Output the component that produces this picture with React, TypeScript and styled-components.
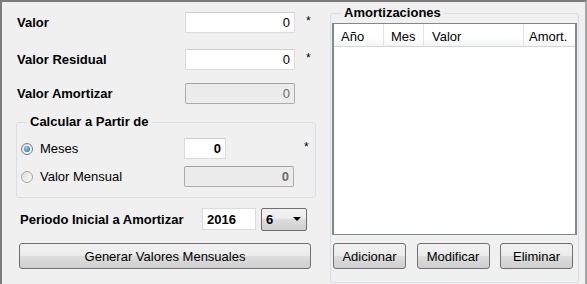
import React from "react";
import styled, { createGlobalStyle } from "styled-components";

const GlobalStyle = createGlobalStyle`
  html, body {
    margin: 0;
    padding: 0;
    background: #f0f0f0;
  }
  * {
    box-sizing: border-box;
  }
`;

const Frame = styled.div`
  width: 587px;
  height: 284px;
  display: flex;
  background: #f0f0f0;
  border-top: 2px solid #7c7c7c;
  border-left: 2px solid #7c7c7c;
  border-right: 2px solid #a3a3a3;
  font-family: "Liberation Sans", Arial, sans-serif;
  font-size: 13px;
  color: #000;
  overflow: hidden;
`;

const LeftCol = styled.div`
  width: 328px;
  padding-left: 15px;
  display: flex;
  flex-direction: column;
`;

const RightCol = styled.div`
  flex: 1;
  display: flex;
  padding-top: 4px;
`;

const FieldRow = styled.div<{ $top: number }>`
  display: flex;
  align-items: center;
  height: 21px;
  margin-top: ${(p) => p.$top}px;
`;

const Label = styled.span<{ $width: number }>`
  width: ${(p) => p.$width}px;
  font-weight: bold;
  white-space: nowrap;
`;

const TextBox = styled.div<{ $width: number; $disabled?: boolean; $bold?: boolean }>`
  width: ${(p) => p.$width}px;
  height: 21px;
  padding: 0 4px;
  display: flex;
  align-items: center;
  justify-content: flex-end;
  background: ${(p) => (p.$disabled ? "#ececec" : "#ffffff")};
  border: 1px solid ${(p) => (p.$disabled ? "#adadad" : "#dcdcdc")};
  border-top-color: ${(p) => (p.$disabled ? "#a2a2a2" : "#cdcdcd")};
  border-radius: ${(p) => (p.$disabled ? "2px" : "1px")};
  color: ${(p) => (p.$disabled ? "#6d6d6d" : "#000")};
  font-weight: ${(p) => (p.$bold ? "bold" : "normal")};
`;

const Required = styled.span<{ $gap: number }>`
  margin-left: ${(p) => p.$gap}px;
  align-self: flex-start;
  margin-top: 2px;
  font-size: 12px;
`;

const Group = styled.fieldset<{ $width: number; $height: number }>`
  margin: 11px 0 0 -1px;
  padding: 9px 0 0 5px;
  width: ${(p) => p.$width}px;
  height: ${(p) => p.$height}px;
  border: 1px solid #d5dfe5;
  border-radius: 3px;
  min-width: 0;
`;

const TableGroup = styled(Group)`
  margin: 0;
  padding: 0 0 0 5px;
`;

const Legend = styled.legend`
  margin-left: 5px;
  padding: 0 3px 0 3px;
  font-weight: bold;
  line-height: 14px;
`;

const RadioRow = styled.div<{ $top: number }>`
  display: flex;
  align-items: center;
  height: 21px;
  margin-top: ${(p) => p.$top}px;
`;

const RadioLabel = styled.label`
  width: 163px;
  display: flex;
  align-items: center;
  gap: 7px;
  margin-left: -1px;
`;

const RadioDot = styled.span<{ $checked?: boolean }>`
  width: 12px;
  height: 12px;
  border-radius: 50%;
  border: 1px solid ${(p) => (p.$checked ? "#6f7f8f" : "#a5a5a5")};
  background: linear-gradient(135deg, #dedede, #fbfbfb);
  display: flex;
  align-items: center;
  justify-content: center;
  &::after {
    content: "";
    width: 6px;
    height: 6px;
    border-radius: 50%;
    background: ${(p) =>
      p.$checked ? "radial-gradient(circle at 40% 35%, #8fd0f7, #1e5f93)" : "transparent"};
  }
`;

const PeriodRow = styled.div`
  display: flex;
  align-items: center;
  margin-top: 10px;
  padding-left: 3px;
  height: 22px;
`;

const YearBox = styled.div`
  width: 54px;
  height: 22px;
  margin-left: 15px;
  padding-left: 4px;
  display: flex;
  align-items: center;
  background: #fff;
  border: 1px solid #dcdcdc;
  font-weight: bold;
`;

const Select = styled.div`
  width: 46px;
  height: 23px;
  margin-left: 5px;
  padding: 0 5px 0 4px;
  display: flex;
  align-items: center;
  justify-content: space-between;
  font-weight: bold;
  border: 1px solid #707070;
  border-radius: 2px;
  background: linear-gradient(#f2f2f2 0%, #ebebeb 50%, #dddddd 50%, #cfcfcf 100%);
`;

const Caret = styled.span`
  width: 0;
  height: 0;
  border-left: 4px solid transparent;
  border-right: 4px solid transparent;
  border-top: 4px solid #000;
`;

const Button = styled.button<{ $width: number }>`
  width: ${(p) => p.$width}px;
  height: 26px;
  padding: 0;
  font-family: inherit;
  font-size: 13px;
  color: #000;
  border: 1px solid #707070;
  border-radius: 3px;
  background: linear-gradient(#f2f2f2 0%, #ebebeb 50%, #dddddd 50%, #cfcfcf 100%);
`;

const WideButton = styled(Button)`
  margin: 13px 0 0 2px;
`;

const GridBox = styled.div`
  margin-top: 3px;
  width: 245px;
  height: 212px;
  margin-left: -4px;
  background: #fff;
  border: 1px solid #828790;
  border-left-width: 2px;
  border-right-width: 2px;
`;

const HeaderRow = styled.div`
  display: grid;
  grid-template-columns: 50px 40px 100px 1fr;
  height: 23px;
  background: linear-gradient(#ffffff 0%, #ffffff 60%, #f4f5f7 100%);
  border-bottom: 1px solid #d5d5d5;
`;

const HeaderCell = styled.div<{ $pad: number }>`
  padding: 5px 0 0 ${(p) => p.$pad}px;
  border-right: 1px solid #e3e4e6;
  white-space: nowrap;
  &:last-child {
    border-right: none;
  }
`;

const ButtonBar = styled.div`
  display: flex;
  justify-content: space-between;
  margin: 8px 0 0 -3px;
  width: 240px;
`;

const App: React.FC = () => {
  return (
    <>
      <GlobalStyle />
      <Frame>
        <LeftCol>
          <FieldRow $top={10}>
            <Label $width={168}>Valor</Label>
            <TextBox $width={110}>0</TextBox>
            <Required $gap={11}>*</Required>
          </FieldRow>
          <FieldRow $top={16}>
            <Label $width={168}>Valor Residual</Label>
            <TextBox $width={110}>0</TextBox>
            <Required $gap={11}>*</Required>
          </FieldRow>
          <FieldRow $top={13}>
            <Label $width={168}>Valor Amortizar</Label>
            <TextBox $width={110} $disabled>
              0
            </TextBox>
          </FieldRow>

          <Group $width={300} $height={83}>
            <Legend>Calcular a Partir de</Legend>
            <RadioRow $top={0}>
              <RadioLabel>
                <RadioDot $checked />
                Meses
              </RadioLabel>
              <TextBox $width={42} $bold>
                0
              </TextBox>
              <Required $gap={78}>*</Required>
            </RadioRow>
            <RadioRow $top={7}>
              <RadioLabel>
                <RadioDot />
                Valor Mensual
              </RadioLabel>
              <TextBox $width={110} $disabled $bold>
                0
              </TextBox>
            </RadioRow>
          </Group>

          <PeriodRow>
            <Label $width={167}>Periodo Inicial a Amortizar</Label>
            <YearBox>2016</YearBox>
            <Select>
              6
              <Caret />
            </Select>
          </PeriodRow>

          <WideButton $width={292}>Generar Valores Mensuales</WideButton>
        </LeftCol>

        <RightCol>
          <TableGroup $width={249} $height={277}>
            <Legend>Amortizaciones</Legend>
            <GridBox>
              <HeaderRow>
                <HeaderCell $pad={7}>Año</HeaderCell>
                <HeaderCell $pad={7}>Mes</HeaderCell>
                <HeaderCell $pad={8}>Valor</HeaderCell>
                <HeaderCell $pad={5}>Amort.</HeaderCell>
              </HeaderRow>
            </GridBox>
            <ButtonBar>
              <Button $width={73}>Adicionar</Button>
              <Button $width={73}>Modificar</Button>
              <Button $width={73}>Eliminar</Button>
            </ButtonBar>
          </TableGroup>
        </RightCol>
      </Frame>
    </>
  );
};

export default App;
